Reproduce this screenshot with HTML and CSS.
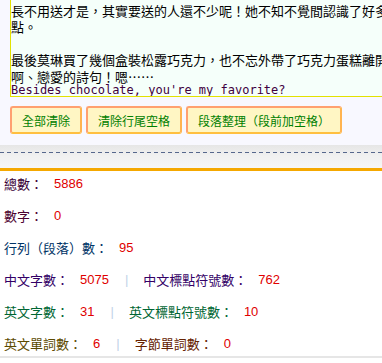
FILE: index.html
```html
<!DOCTYPE html>
<html lang="zh-Hant">
<head>
<meta charset="utf-8">
<title>字數統計</title>
<link rel="stylesheet" href="styles.css">
</head>
<body>
<div class="panel">
  <div class="editor">
    <div class="line">長不用送才是，其實要送的人還不少呢！她不知不覺間認識了好多朋友</div>
    <div class="line">點。</div>
    <div class="line">&nbsp;</div>
    <div class="line">最後莫琳買了幾個盒裝松露巧克力，也不忘外帶了巧克力蛋糕離開</div>
    <div class="line">啊、戀愛的詩句！嗯……</div>
    <div class="line mono">Besides chocolate, you're my favorite?</div>
  </div>
  <div class="actions">
    <button class="btn">全部清除</button>
    <button class="btn">清除行尾空格</button>
    <button class="btn">段落整理（段前加空格）</button>
  </div>
</div>
<div class="divider"><div class="dash"></div></div>
<div class="accent"></div>
<div class="stats">
  <div class="row c-total"><span>總數：</span><span class="num">5886</span></div>
  <div class="row c-digit"><span>數字：</span><span class="num">0</span></div>
  <div class="row c-lines"><span>行列（段落）數：</span><span class="num">95</span></div>
  <div class="row c-zh"><span>中文字數：</span><span class="num">5075</span><span class="sep">|</span><span>中文標點符號數：</span><span class="num">762</span></div>
  <div class="row c-en"><span>英文字數：</span><span class="num">31</span><span class="sep">|</span><span>英文標點符號數：</span><span class="num">10</span></div>
  <div class="row c-word"><span>英文單詞數：</span><span class="num">6</span><span class="sep">|</span><span class="c-byte">字節單詞數：</span><span class="num">0</span></div>
</div>
</body>
</html>
```

FILE: styles.css
```css
html, body {
  margin: 0;
  padding: 0;
}
body {
  background: #ffffff;
  overflow: hidden;
  width: 382px;
  font-family: "Noto Sans CJK TC", "Liberation Sans", sans-serif;
}
.panel {
  background: #f8f8ff;
  padding: 0 0 11px 10px;
  overflow: hidden;
}
.editor {
  width: 470px;
  height: 96px;
  background: #f5fffa;
  border-left: 1px solid #e2e200;
  border-bottom: 1px solid #e2e200;
  display: flex;
  flex-direction: column;
  justify-content: flex-end;
  overflow: hidden;
  color: #000;
  font-size: 13px;
  line-height: 16.5px;
}
.line {
  flex: none;
  white-space: nowrap;
}
.mono {
  font-family: "DejaVu Sans Mono", "Liberation Mono", monospace;
  font-size: 12px;
  line-height: 11px;
  height: 11px;
  color: #400040;
}
.actions {
  display: flex;
  gap: 4px;
  margin-top: 9px;
}
.btn {
  height: 28px;
  margin: 0;
  padding: 0 10px;
  font-family: "Noto Sans CJK TC", sans-serif;
  font-size: 12px;
  color: #008000;
  background: #fff6c4;
  border: 2px solid;
  border-color: #ffa070 #ffb450 #ffbf40 #ffa070;
  border-radius: 3px;
}
.divider {
  height: 23px;
  box-sizing: border-box;
  padding-top: 7px;
  background: linear-gradient(#e6e6e6, #f1f1f1 50%, #f6f6f6);
}
.dash {
  height: 1px;
  background: repeating-linear-gradient(90deg, #56678c 0 4px, transparent 4px 7px);
}
.accent {
  height: 3px;
  background: #f5a800;
}
.stats {
  display: flex;
  flex-direction: column;
  gap: 6px;
  padding: 0 0 0 4px;
  height: 187px;
  box-sizing: border-box;
  border-bottom: 2px solid #e6e6e6;
  font-size: 13px;
}
.row {
  display: flex;
  align-items: center;
  line-height: 26px;
  white-space: nowrap;
}
.num {
  margin-left: 11px;
  font-family: "Liberation Sans", sans-serif;
  color: #e00000;
}
.sep {
  margin: 0 15px 0 16px;
  font-family: "Liberation Sans", sans-serif;
  color: #c2d2e8;
}
.c-total { color: #3a0038; }
.c-digit { color: #4d0030; }
.c-lines { color: #003366; }
.c-zh { color: #330066; }
.c-en { color: #006633; }
.c-word { color: #5c4a00; }
.c-byte { color: #662200; }
```
